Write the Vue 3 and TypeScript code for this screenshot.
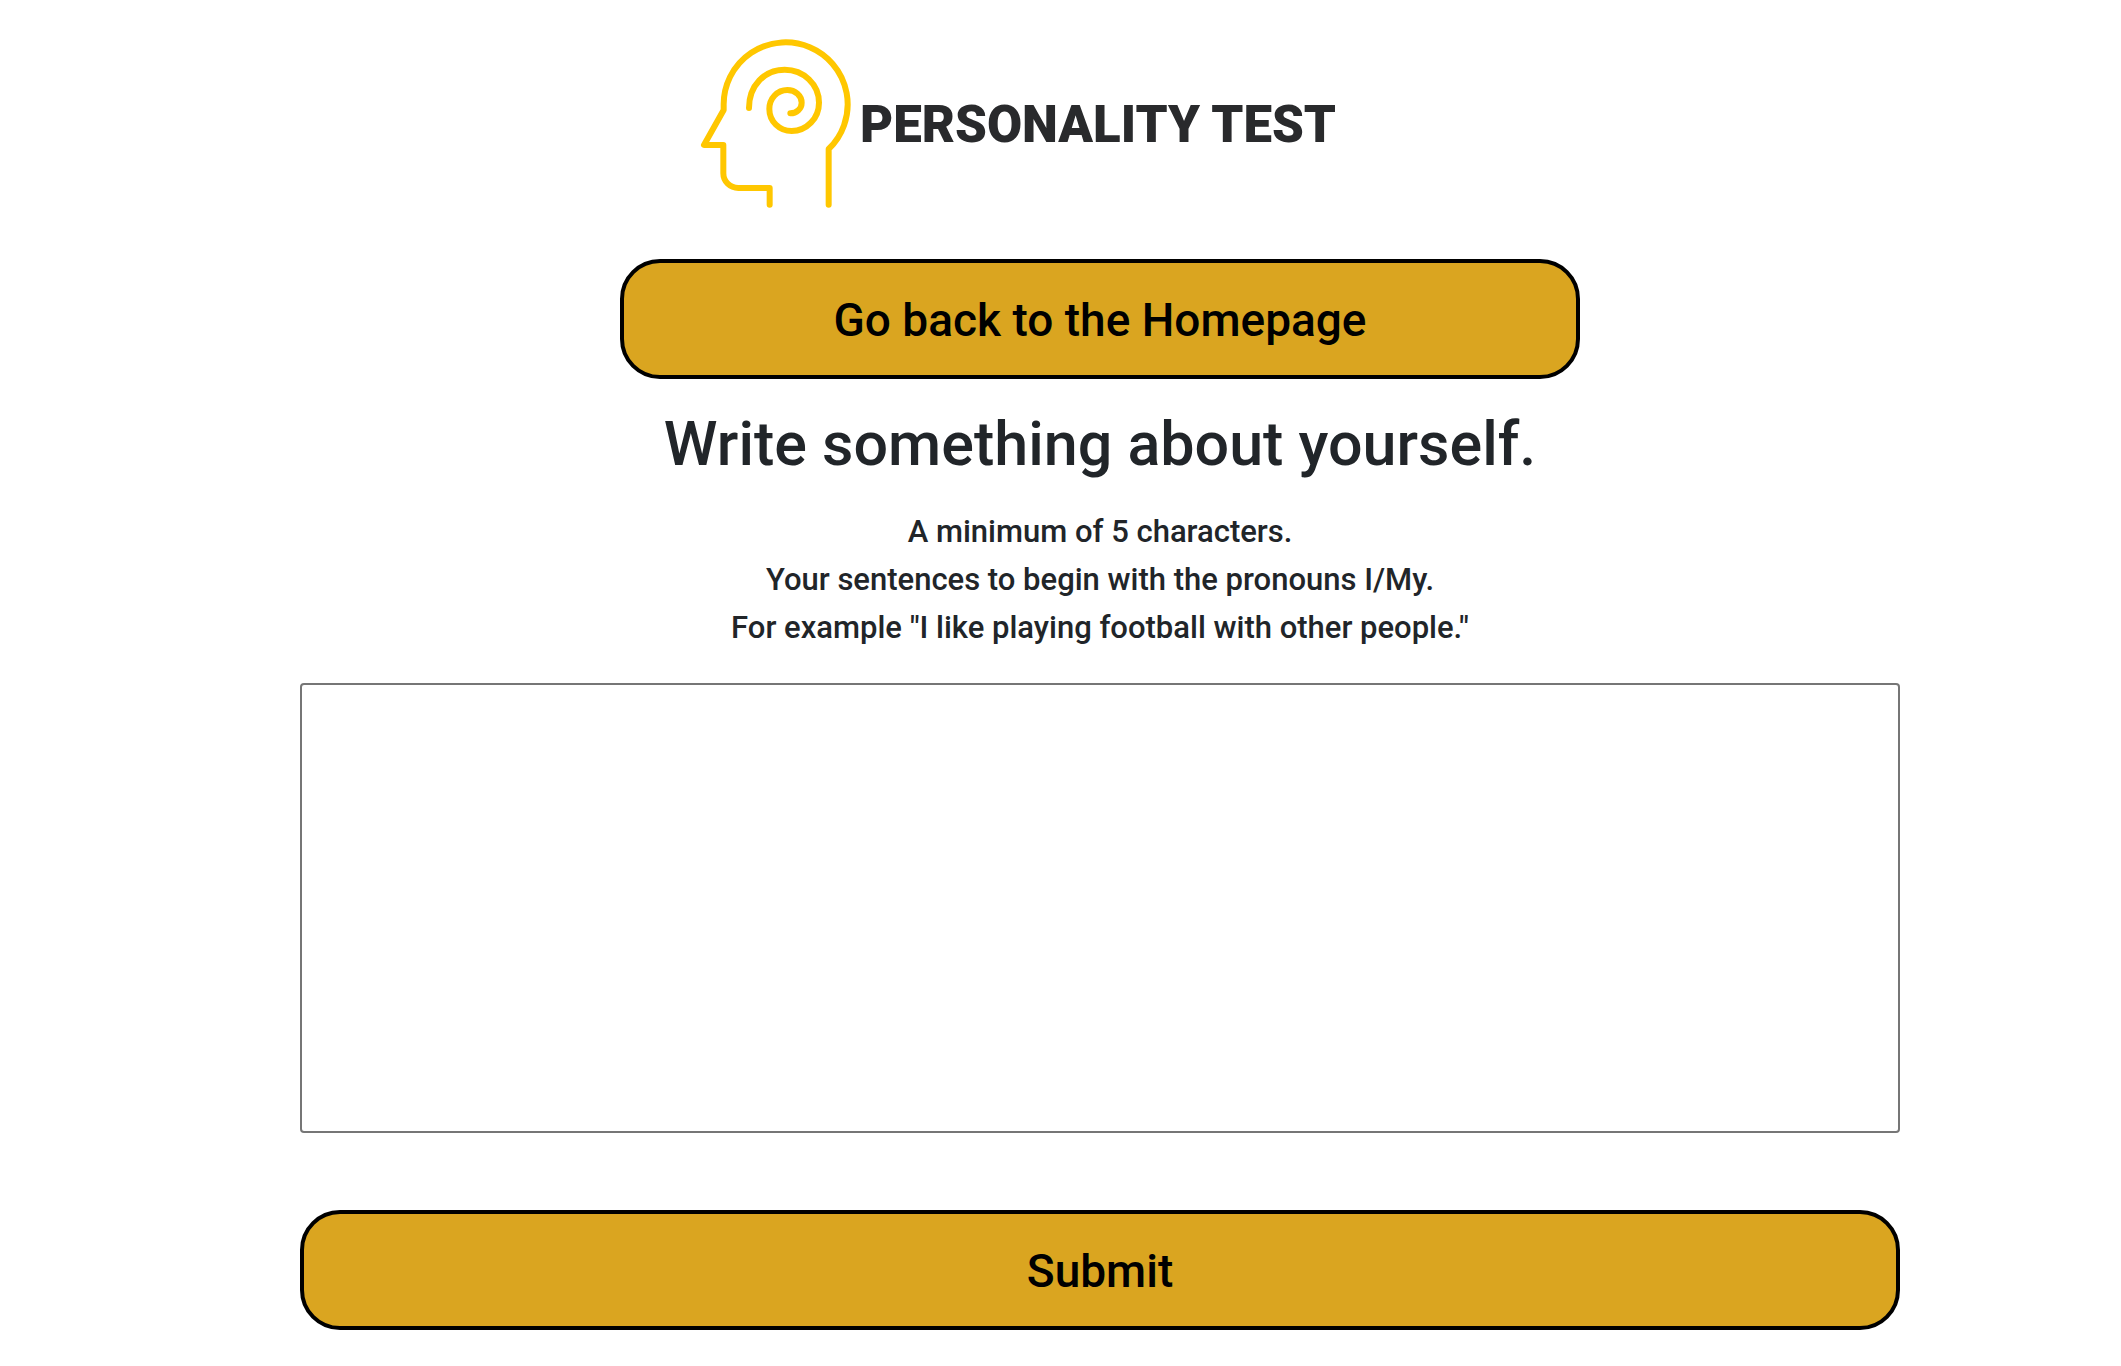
<script setup lang="ts">
import { ref } from 'vue'

const hints: string[] = [
  'A minimum of 5 characters.',
  'Your sentences to begin with the pronouns I/My.',
  'For example "I like playing football with other people."',
]
const about = ref('')
</script>

<template>
  <main class="page">
    <header class="logo">
      <svg class="head" viewBox="0 0 510 570" aria-hidden="true">
        <path d="M416 524V357A186 186 0 1 0 101 224V240L42 345H100V430A45 44 0 0 0 145 474H239V524" />
        <path d="M177 234C177 166 224 119 284 119C341 119 387 163 387 218C387 265 350 303 305 303C268 303 238 274 238 237C238 205 262 180 292 180C316 180 335 197 335 218C335 236 320 250 301 250" />
      </svg>
      <span class="brand">PERSONALITY TEST</span>
    </header>
    <button class="btn home" type="button">Go back to the Homepage</button>
    <form class="form" @submit.prevent>
      <h1 class="title"><label for="about">Write something about yourself.</label></h1>
      <div class="hints">
        <p v-for="hint in hints" :key="hint">{{ hint }}</p>
      </div>
      <textarea id="about" v-model="about" class="box"></textarea>
      <button class="btn" type="submit">Submit</button>
    </form>
  </main>
</template>

<style>
body {
  margin: 0;
  background: #fff;
}
</style>

<style scoped>
.page {
  display: flex;
  flex-direction: column;
  align-items: center;
  padding: 30px 221px 36px 300px;
  color: #212529;
  font-family: Roboto, "Liberation Sans", sans-serif;
  font-weight: 500;
}
.logo {
  display: flex;
  align-items: center;
  padding-right: 174px;
  margin-bottom: 39px;
}
.head {
  width: 170px;
  height: 190px;
  fill: none;
  stroke: #ffc700;
  stroke-width: 18;
  stroke-linecap: round;
  stroke-linejoin: round;
}
.brand {
  color: #292a2c;
  font-size: 51px;
  line-height: 60px;
  font-weight: 900;
  white-space: nowrap;
}
.btn {
  width: 100%;
  height: 120px;
  padding: 2px 0 0;
  border: 4px solid #000;
  border-radius: 40px;
  background: #daa520;
  color: #000;
  font: inherit;
  font-size: 46px;
}
.home {
  width: 60%;
}
.form {
  display: flex;
  flex-direction: column;
  width: 100%;
  text-align: center;
}
.title {
  margin: 25px 0 24px;
  font-size: 61px;
  line-height: 80px;
  font-weight: 500;
}
.hints {
  margin-bottom: 31px;
  font-size: 31px;
  line-height: 48px;
}
.hints p {
  margin: 0;
}
.box {
  box-sizing: border-box;
  height: 450px;
  margin: 0 0 77px;
  padding: 8px;
  border: 2px solid #767676;
  border-radius: 4px;
  background: #fff;
  color: #212529;
  font: inherit;
  font-size: 31px;
  resize: none;
}
</style>
